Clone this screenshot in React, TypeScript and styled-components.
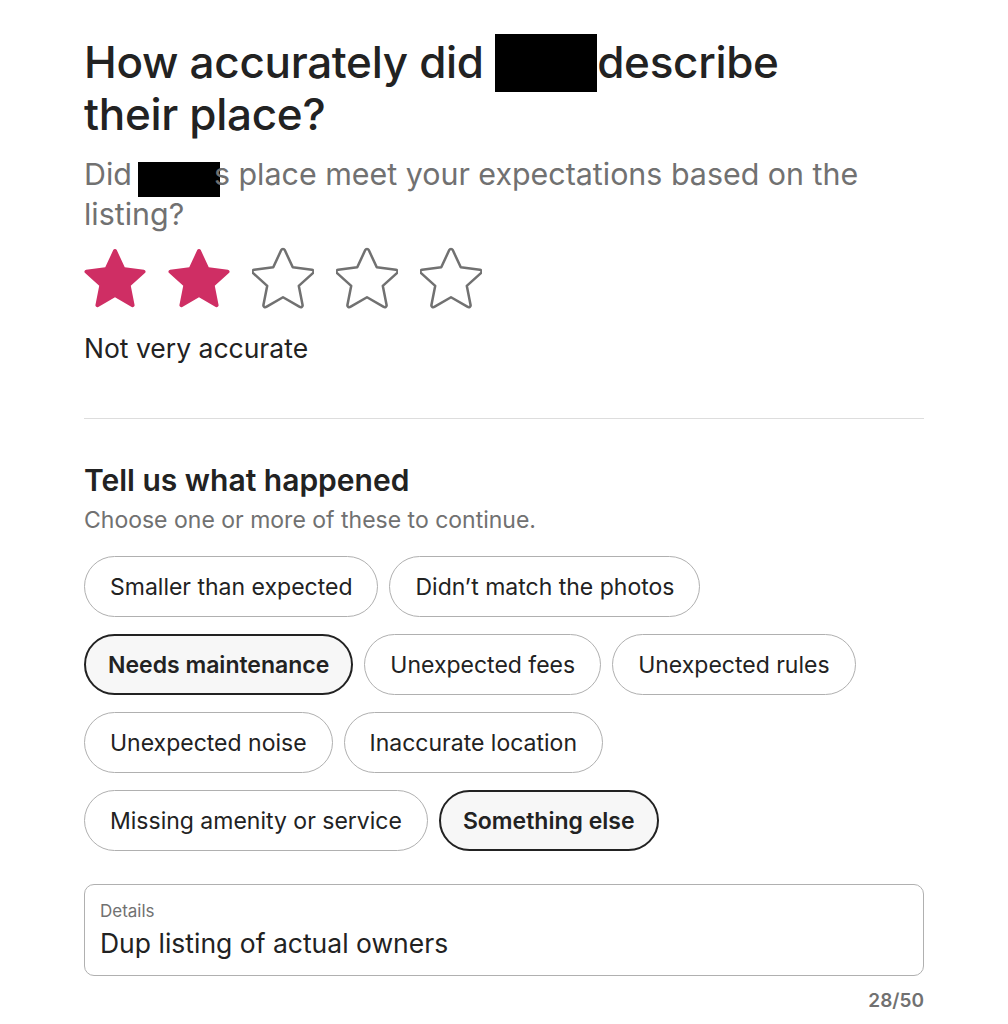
import React from 'react';
import styled, { createGlobalStyle } from 'styled-components';

const GlobalStyle = createGlobalStyle`
  html, body {
    margin: 0;
    padding: 0;
    background: #ffffff;
  }
  body {
    font-family: Inter, "Noto Sans", "Liberation Sans", sans-serif;
    color: #222222;
  }
`;

const STAR_PATH =
  'M15.094 1.579l-4.124 8.885-9.86 1.27a1 1 0 0 0-.542 1.736l7.293 6.565-1.965 9.852a1 1 0 0 0 1.483 1.061L16 25.951l8.625 4.997a1 1 0 0 0 1.482-1.06l-1.965-9.853 7.293-6.565a1 1 0 0 0-.541-1.735l-9.86-1.271-4.127-8.885a1 1 0 0 0-1.814 0z';

const reasons = [
  [
    { label: 'Smaller than expected', selected: false },
    { label: 'Didn\u2019t match the photos', selected: false },
  ],
  [
    { label: 'Needs maintenance', selected: true },
    { label: 'Unexpected fees', selected: false },
    { label: 'Unexpected rules', selected: false },
  ],
  [
    { label: 'Unexpected noise', selected: false },
    { label: 'Inaccurate location', selected: false },
  ],
  [
    { label: 'Missing amenity or service', selected: false },
    { label: 'Something else', selected: true },
  ],
];

const Star = ({ filled }: { filled: boolean }) => (
  <StarIcon viewBox="0 0 32 32" $filled={filled}>
    <path d={STAR_PATH} />
  </StarIcon>
);

const App = () => {
  const rating = 2;
  return (
    <>
      <GlobalStyle />
      <Page>
        <Title>
          How accurately did <TitleRedact />describe their place?
        </Title>
        <Subtitle>
          Did<SubRedact />s place meet your expectations based on the listing?
        </Subtitle>
        <Stars>
          {[1, 2, 3, 4, 5].map((n) => (
            <Star key={n} filled={n <= rating} />
          ))}
        </Stars>
        <RatingLabel>Not very accurate</RatingLabel>

        <Divider />

        <SectionTitle>Tell us what happened</SectionTitle>
        <SectionHint>Choose one or more of these to continue.</SectionHint>

        <ChipList>
          {reasons.map((row, i) => (
            <ChipRow key={i}>
              {row.map((r) => (
                <Chip key={r.label} $selected={r.selected}>
                  {r.label}
                </Chip>
              ))}
            </ChipRow>
          ))}
        </ChipList>

        <Field>
          <FieldLabel>Details</FieldLabel>
          <FieldValue>Dup listing of actual owners</FieldValue>
        </Field>
        <Counter>28/50</Counter>
      </Page>
    </>
  );
};

const Page = styled.div`
  width: 840px;
  padding: 36px 0 0 84px;
`;

const Title = styled.h1`
  margin: 0;
  font-size: 44px;
  line-height: 52px;
  font-weight: 500;
  letter-spacing: -0.3px;
  color: #222222;
  width: 720px;
`;

const TitleRedact = styled.span`
  display: inline-block;
  width: 102px;
  height: 58px;
  background: #000;
  vertical-align: -8px;
  margin: -6px 0;
`;

const Subtitle = styled.p`
  margin: 14px 0 0;
  font-size: 30.4px;
  line-height: 40px;
  font-weight: 400;
  color: #717171;
`;

const SubRedact = styled.span`
  display: inline-block;
  width: 82px;
  height: 35px;
  background: #000;
  vertical-align: -8px;
  margin: -4px -6px -4px 6px;
`;

const Stars = styled.div`
  display: flex;
  gap: 22px;
  margin-top: 13px;
`;

const StarIcon = styled.svg<{ $filled: boolean }>`
  width: 62px;
  height: 62px;
  display: block;
  path {
    fill: ${(p) => (p.$filled ? '#cf2e64' : 'none')};
    stroke: ${(p) => (p.$filled ? 'none' : '#717171')};
    stroke-width: 1.3;
    stroke-linejoin: round;
  }
`;

const RatingLabel = styled.div`
  margin-top: 23px;
  font-size: 26.5px;
  line-height: 32px;
  color: #222222;
`;

const Divider = styled.hr`
  margin: 54px 0 0;
  border: none;
  border-top: 1px solid #dddddd;
`;

const SectionTitle = styled.h2`
  margin: 43px 0 0;
  font-size: 30px;
  line-height: 36px;
  font-weight: 600;
  color: #222222;
`;

const SectionHint = styled.div`
  margin-top: 8px;
  font-size: 23px;
  line-height: 28px;
  color: #717171;
`;

const ChipList = styled.div`
  display: flex;
  flex-direction: column;
  gap: 17px;
  margin-top: 22px;
`;

const ChipRow = styled.div`
  display: flex;
  gap: 11px;
`;

const Chip = styled.button<{ $selected: boolean }>`
  font-family: inherit;
  height: 61px;
  padding: 0 ${(p) => (p.$selected ? 22 : 25)}px;
  border-radius: 31px;
  font-size: 23px;
  font-weight: ${(p) => (p.$selected ? 600 : 400)};
  color: #222222;
  background: ${(p) => (p.$selected ? '#f7f7f7' : '#ffffff')};
  border: ${(p) => (p.$selected ? '2px solid #222222' : '1px solid #b0b0b0')};
  white-space: nowrap;
`;

const Field = styled.div`
  margin-top: 33px;
  border: 1px solid #b0b0b0;
  border-radius: 10px;
  padding: 16px 15px 16px;
  height: 58px;
`;

const FieldLabel = styled.div`
  font-size: 17px;
  line-height: 20px;
  color: #717171;
`;

const FieldValue = styled.div`
  margin-top: 6px;
  font-size: 26.5px;
  line-height: 32px;
  color: #222222;
`;

const Counter = styled.div`
  margin-top: 14px;
  text-align: right;
  font-size: 19px;
  line-height: 22px;
  font-weight: 600;
  color: #717171;
`;

export default App;
